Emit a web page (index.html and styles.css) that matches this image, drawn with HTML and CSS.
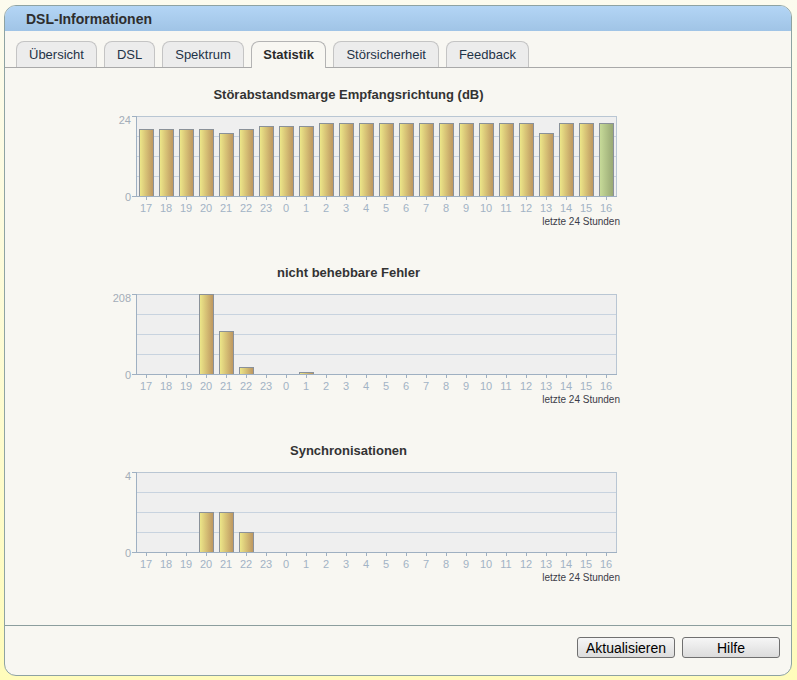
FILE: index.html
```html
<!DOCTYPE html>
<html lang="de">
<head>
<meta charset="utf-8">
<title>DSL-Informationen</title>
<link rel="stylesheet" href="styles.css">
</head>
<body>
<div class="panel">
  <div class="header">DSL-Informationen</div>
  <div class="tabs">
    <div class="tab">Übersicht</div>
    <div class="tab">DSL</div>
    <div class="tab">Spektrum</div>
    <div class="tab active">Statistik</div>
    <div class="tab">Störsicherheit</div>
    <div class="tab">Feedback</div>
  </div>
  <div class="content">
    <div class="chart">
      <div class="chart-title">Störabstandsmarge Empfangsrichtung (dB)</div>
      <svg class="plot" width="530" height="162" viewBox="0 0 530 162">
        <defs>
          <linearGradient id="gy1" x1="0" y1="0" x2="1" y2="0"><stop offset="0" stop-color="#eee98a"/><stop offset="1" stop-color="#bc945f"/></linearGradient>
          <linearGradient id="gg1" x1="0" y1="0" x2="1" y2="0"><stop offset="0" stop-color="#c8dc9a"/><stop offset="1" stop-color="#97a673"/></linearGradient>
        </defs>
        <rect class="area" x="36.5" y="13.5" width="480" height="80"/>
        <g class="grid"><line x1="37" y1="33.5" x2="516" y2="33.5"/><line x1="37" y1="53.5" x2="516" y2="53.5"/><line x1="37" y1="73.5" x2="516" y2="73.5"/></g>
        <g class="bars" fill="url(#gy1)">
          <rect x="39.5" y="26.5" width="14" height="67"/>
          <rect x="59.5" y="26.5" width="14" height="67"/>
          <rect x="79.5" y="26.5" width="14" height="67"/>
          <rect x="99.5" y="26.5" width="14" height="67"/>
          <rect x="119.5" y="30.5" width="14" height="63"/>
          <rect x="139.5" y="26.5" width="14" height="67"/>
          <rect x="159.5" y="23.5" width="14" height="70"/>
          <rect x="179.5" y="23.5" width="14" height="70"/>
          <rect x="199.5" y="23.5" width="14" height="70"/>
          <rect x="219.5" y="20.5" width="14" height="73"/>
          <rect x="239.5" y="20.5" width="14" height="73"/>
          <rect x="259.5" y="20.5" width="14" height="73"/>
          <rect x="279.5" y="20.5" width="14" height="73"/>
          <rect x="299.5" y="20.5" width="14" height="73"/>
          <rect x="319.5" y="20.5" width="14" height="73"/>
          <rect x="339.5" y="20.5" width="14" height="73"/>
          <rect x="359.5" y="20.5" width="14" height="73"/>
          <rect x="379.5" y="20.5" width="14" height="73"/>
          <rect x="399.5" y="20.5" width="14" height="73"/>
          <rect x="419.5" y="20.5" width="14" height="73"/>
          <rect x="439.5" y="30.5" width="14" height="63"/>
          <rect x="459.5" y="20.5" width="14" height="73"/>
          <rect x="479.5" y="20.5" width="14" height="73"/>
          <rect x="499.5" y="20.5" width="14" height="73" fill="url(#gg1)"/>
        </g>
        <g class="axis">
          <line x1="36.5" y1="13" x2="36.5" y2="94"/><line x1="36" y1="93.5" x2="517" y2="93.5"/>
          <line x1="32" y1="13.5" x2="36" y2="13.5"/><line x1="32" y1="93.5" x2="36" y2="93.5"/>
          <path d="M46.5 94v3M66.5 94v3M86.5 94v3M106.5 94v3M126.5 94v3M146.5 94v3M166.5 94v3M186.5 94v3M206.5 94v3M226.5 94v3M246.5 94v3M266.5 94v3M286.5 94v3M306.5 94v3M326.5 94v3M346.5 94v3M366.5 94v3M386.5 94v3M406.5 94v3M426.5 94v3M446.5 94v3M466.5 94v3M486.5 94v3M506.5 94v3"/>
        </g>
        <g class="ylab"><text x="31" y="21">24</text><text x="31" y="97.5">0</text></g>
        <g class="xlab"><text x="46" y="109">17</text><text x="66" y="109">18</text><text x="86" y="109">19</text><text x="106" y="109">20</text><text x="126" y="109">21</text><text x="146" y="109">22</text><text x="166" y="109">23</text><text x="186" y="109">0</text><text x="206" y="109">1</text><text x="226" y="109">2</text><text x="246" y="109">3</text><text x="266" y="109">4</text><text x="286" y="109">5</text><text x="306" y="109">6</text><text x="326" y="109">7</text><text x="346" y="109">8</text><text x="366" y="109">9</text><text x="386" y="109">10</text><text x="406" y="109">11</text><text x="426" y="109">12</text><text x="446" y="109">13</text><text x="466" y="109">14</text><text x="486" y="109">15</text><text x="506" y="109">16</text></g>
        <text class="period" x="520" y="121.5">letzte 24 Stunden</text>
      </svg>
    </div>
    <div class="chart">
      <div class="chart-title">nicht behebbare Fehler</div>
      <svg class="plot" width="530" height="162" viewBox="0 0 530 162">
        <defs>
          <linearGradient id="gy2" x1="0" y1="0" x2="1" y2="0"><stop offset="0" stop-color="#eee98a"/><stop offset="1" stop-color="#bc945f"/></linearGradient>
        </defs>
        <rect class="area" x="36.5" y="13.5" width="480" height="80"/>
        <g class="grid"><line x1="37" y1="33.5" x2="516" y2="33.5"/><line x1="37" y1="53.5" x2="516" y2="53.5"/><line x1="37" y1="73.5" x2="516" y2="73.5"/></g>
        <g class="bars" fill="url(#gy2)">
          <rect x="99.5" y="13.5" width="14" height="80"/>
          <rect x="119.5" y="50.5" width="14" height="43"/>
          <rect x="139.5" y="86.5" width="14" height="7"/>
          <rect x="199.5" y="91.5" width="14" height="2"/>
        </g>
        <g class="axis">
          <line x1="36.5" y1="13" x2="36.5" y2="94"/><line x1="36" y1="93.5" x2="517" y2="93.5"/>
          <line x1="32" y1="13.5" x2="36" y2="13.5"/><line x1="32" y1="93.5" x2="36" y2="93.5"/>
          <path d="M46.5 94v3M66.5 94v3M86.5 94v3M106.5 94v3M126.5 94v3M146.5 94v3M166.5 94v3M186.5 94v3M206.5 94v3M226.5 94v3M246.5 94v3M266.5 94v3M286.5 94v3M306.5 94v3M326.5 94v3M346.5 94v3M366.5 94v3M386.5 94v3M406.5 94v3M426.5 94v3M446.5 94v3M466.5 94v3M486.5 94v3M506.5 94v3"/>
        </g>
        <g class="ylab"><text x="31" y="21">208</text><text x="31" y="97.5">0</text></g>
        <g class="xlab"><text x="46" y="109">17</text><text x="66" y="109">18</text><text x="86" y="109">19</text><text x="106" y="109">20</text><text x="126" y="109">21</text><text x="146" y="109">22</text><text x="166" y="109">23</text><text x="186" y="109">0</text><text x="206" y="109">1</text><text x="226" y="109">2</text><text x="246" y="109">3</text><text x="266" y="109">4</text><text x="286" y="109">5</text><text x="306" y="109">6</text><text x="326" y="109">7</text><text x="346" y="109">8</text><text x="366" y="109">9</text><text x="386" y="109">10</text><text x="406" y="109">11</text><text x="426" y="109">12</text><text x="446" y="109">13</text><text x="466" y="109">14</text><text x="486" y="109">15</text><text x="506" y="109">16</text></g>
        <text class="period" x="520" y="121.5">letzte 24 Stunden</text>
      </svg>
    </div>
    <div class="chart">
      <div class="chart-title">Synchronisationen</div>
      <svg class="plot" width="530" height="162" viewBox="0 0 530 162">
        <defs>
          <linearGradient id="gy3" x1="0" y1="0" x2="1" y2="0"><stop offset="0" stop-color="#eee98a"/><stop offset="1" stop-color="#bc945f"/></linearGradient>
        </defs>
        <rect class="area" x="36.5" y="13.5" width="480" height="80"/>
        <g class="grid"><line x1="37" y1="33.5" x2="516" y2="33.5"/><line x1="37" y1="53.5" x2="516" y2="53.5"/><line x1="37" y1="73.5" x2="516" y2="73.5"/></g>
        <g class="bars" fill="url(#gy3)">
          <rect x="99.5" y="53.5" width="14" height="40"/>
          <rect x="119.5" y="53.5" width="14" height="40"/>
          <rect x="139.5" y="73.5" width="14" height="20"/>
        </g>
        <g class="axis">
          <line x1="36.5" y1="13" x2="36.5" y2="94"/><line x1="36" y1="93.5" x2="517" y2="93.5"/>
          <line x1="32" y1="13.5" x2="36" y2="13.5"/><line x1="32" y1="93.5" x2="36" y2="93.5"/>
          <path d="M46.5 94v3M66.5 94v3M86.5 94v3M106.5 94v3M126.5 94v3M146.5 94v3M166.5 94v3M186.5 94v3M206.5 94v3M226.5 94v3M246.5 94v3M266.5 94v3M286.5 94v3M306.5 94v3M326.5 94v3M346.5 94v3M366.5 94v3M386.5 94v3M406.5 94v3M426.5 94v3M446.5 94v3M466.5 94v3M486.5 94v3M506.5 94v3"/>
        </g>
        <g class="ylab"><text x="31" y="21">4</text><text x="31" y="97.5">0</text></g>
        <g class="xlab"><text x="46" y="109">17</text><text x="66" y="109">18</text><text x="86" y="109">19</text><text x="106" y="109">20</text><text x="126" y="109">21</text><text x="146" y="109">22</text><text x="166" y="109">23</text><text x="186" y="109">0</text><text x="206" y="109">1</text><text x="226" y="109">2</text><text x="246" y="109">3</text><text x="266" y="109">4</text><text x="286" y="109">5</text><text x="306" y="109">6</text><text x="326" y="109">7</text><text x="346" y="109">8</text><text x="366" y="109">9</text><text x="386" y="109">10</text><text x="406" y="109">11</text><text x="426" y="109">12</text><text x="446" y="109">13</text><text x="466" y="109">14</text><text x="486" y="109">15</text><text x="506" y="109">16</text></g>
        <text class="period" x="520" y="121.5">letzte 24 Stunden</text>
      </svg>
    </div>
  </div>
  <div class="footer">
    <button class="btn" type="button">Aktualisieren</button>
    <button class="btn" type="button">Hilfe</button>
  </div>
</div>
</body>
</html>
```
FILE: styles.css
```css
html, body {
  margin: 0;
  height: 680px;
}
body {
  box-sizing: border-box;
  padding: 5px 0 0 4px;
  background: linear-gradient(#fcfbee, #fffcbb);
  font-family: "Liberation Sans", Arial, sans-serif;
  color: #333;
}
.panel {
  box-sizing: border-box;
  width: 788px;
  height: 671px;
  border: 1px solid #8ea3a3;
  border-radius: 12px;
  background: #f8f7f2;
  overflow: hidden;
}
.header {
  height: 25px;
  padding-left: 21px;
  background: linear-gradient(#b3d5f5, #a0c4e6);
  font-size: 14px;
  font-weight: bold;
  line-height: 26px;
  color: #2e2e2e;
}
.tabs {
  box-sizing: border-box;
  height: 37px;
  padding: 10px 0 0 11px;
  display: flex;
  align-items: flex-start;
  gap: 7px;
  border-bottom: 1px solid #a9a9a9;
}
.tab {
  box-sizing: border-box;
  height: 26px;
  padding: 0 12px;
  border: 1px solid #c4c4c4;
  border-bottom: none;
  border-radius: 8px 8px 0 0;
  background: #ececec;
  font-size: 13px;
  line-height: 25px;
  color: #1f3347;
}
.tab.active {
  height: 27px;
  padding: 0 11.5px;
  border-color: #b4b4b4;
  background: #f8f7f2;
  font-weight: bold;
  color: #2a2a2a;
  position: relative;
  z-index: 1;
}
.content {
  box-sizing: border-box;
  height: 558px;
  padding-top: 19px;
  border-bottom: 1px solid #8c9e9e;
}
.chart {
  margin-left: 95px;
  width: 497px;
  height: 178px;
}
.chart-title {
  text-align: center;
  font-size: 13px;
  font-weight: bold;
  line-height: 16px;
  color: #333;
}
.plot {
  display: block;
  overflow: visible;
  font-family: "Liberation Sans", Arial, sans-serif;
}
.plot .area {
  fill: #efefef;
  stroke: #b9c6d3;
  stroke-width: 1;
}
.plot .grid line {
  stroke: #c8d3df;
  stroke-width: 1;
}
.plot .bars rect {
  stroke: #8a9199;
  stroke-width: 1;
}
.plot .axis line, .plot .axis path {
  stroke: #9fb0c2;
  stroke-width: 1;
  fill: none;
}
.plot .ylab text {
  font-size: 11px;
  fill: #a3adb8;
  text-anchor: end;
}
.plot .xlab text {
  font-size: 11px;
  fill: #a2b3c5;
  text-anchor: middle;
}
.plot .period {
  font-size: 10px;
  fill: #3c3c48;
  text-anchor: end;
}
.footer {
  display: flex;
  justify-content: flex-end;
  gap: 7px;
  padding: 11px 11px 0 0;
}
.btn {
  box-sizing: border-box;
  width: 98px;
  height: 21px;
  padding: 0;
  border: 1px solid #707070;
  border-radius: 3px;
  background: linear-gradient(#f6f6f6, #dcdcdc);
  font-family: "Liberation Sans", Arial, sans-serif;
  font-size: 14px;
  line-height: 20px;
  color: #000;
}
```
